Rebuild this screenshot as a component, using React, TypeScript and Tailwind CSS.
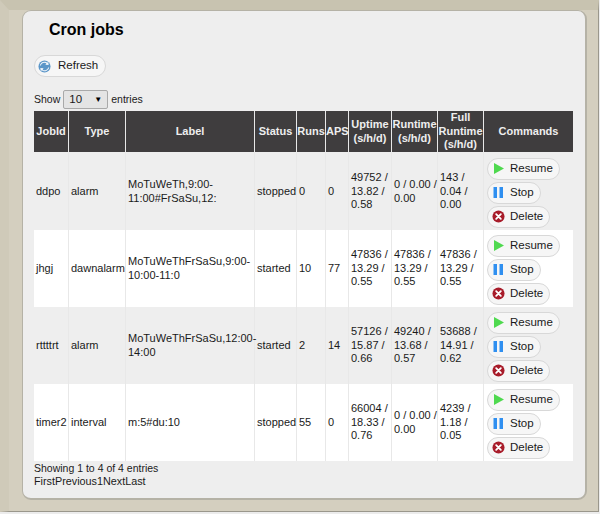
const rows = [
  { id: "ddpo", type: "alarm", label: "MoTuWeTh,9:00-11:00#FrSaSu,12:", status: "stopped", runs: "0", aps: "0", up: "49752 / 13.82 / 0.58", run: "0 / 0.00 / 0.00", full: "143 / 0.04 / 0.00" },
  { id: "jhgj", type: "dawnalarm", label: "MoTuWeThFrSaSu,9:00-10:00-11:0", status: "started", runs: "10", aps: "77", up: "47836 / 13.29 / 0.55", run: "47836 / 13.29 / 0.55", full: "47836 / 13.29 / 0.55" },
  { id: "rttttrt", type: "alarm", label: "MoTuWeThFrSaSu,12:00-14:00", status: "started", runs: "2", aps: "14", up: "57126 / 15.87 / 0.66", run: "49240 / 13.68 / 0.57", full: "53688 / 14.91 / 0.62" },
  { id: "timer2", type: "interval", label: "m:5#du:10", status: "stopped", runs: "55", aps: "0", up: "66004 / 18.33 / 0.76", run: "0 / 0.00 / 0.00", full: "4239 / 1.18 / 0.05" },
]

function Pill({ icon, label }: { icon: React.ReactNode; label: string }) {
  return (
    <button className="flex h-[22px] items-center gap-[5px] rounded-full border border-[#d8d8d8] bg-[#f6f6f6] pl-[4px] pr-[6px] text-[11.5px] text-[#1a1a1a]">
      {icon}
      {label}
    </button>
  )
}

function RefreshIcon() {
  return (
    <svg width="13" height="13" viewBox="0 0 14 14">
      <circle cx="7" cy="7" r="6.5" fill="#5b96c8" />
      <path d="M3 6a4 4 0 0 1 6-2.5L8 5l3.5.5L11 2 10 3A5 5 0 0 0 2 6z" fill="#f2f6fa" />
      <path d="M11 8a4 4 0 0 1-6 2.5L6 9l-3.5-.5L3 12l1-1a5 5 0 0 0 8-3z" fill="#f2f6fa" />
    </svg>
  )
}

function PlayIcon() {
  return (
    <svg width="13" height="13" viewBox="0 0 13 13">
      <path d="M2 1l10 5.5L2 12z" fill="#4fd94f" />
    </svg>
  )
}

function PauseIcon() {
  return (
    <svg width="13" height="13" viewBox="0 0 13 13">
      <rect x="1.5" y="1" width="3.5" height="11" fill="#2f8ff0" />
      <rect x="7.5" y="1" width="3.5" height="11" fill="#2f8ff0" />
    </svg>
  )
}

function DeleteIcon() {
  return (
    <svg width="13" height="13" viewBox="0 0 14 14">
      <circle cx="7" cy="7" r="6.5" fill="#a81c2a" />
      <path d="M4.5 4.5l5 5M9.5 4.5l-5 5" stroke="#fff" strokeWidth="2" strokeLinecap="round" />
    </svg>
  )
}

export default function App() {
  return (
    <div className="h-[514px] w-[600px] overflow-hidden bg-[#ececec] font-['Liberation_Sans',Arial,sans-serif] text-[11px] text-[#1a1a1a]">
      <div className="h-[512px] w-[599px] border-b border-l-[9px] border-r border-t-[10px] border-b-[#9a978c] border-l-[#cfcab9] border-r-[#9a978c] border-t-[#c8c3b0] bg-[#d4cfbf] pl-[13px]">
        <div className="h-[490px] w-[565px] rounded-[9px] border border-b-2 border-r-2 border-[#b5b2a6] bg-[#eeeeee] pl-[11px]">
          <h1 className="ml-[15px] pt-[9px] text-[16px] font-bold leading-[20px] text-black">Cron jobs</h1>
          <div className="mt-[15px] flex">
            <button className="flex h-[22px] items-center gap-[7px] rounded-full border border-[#d8d8d8] bg-[#f6f6f6] pl-[3px] pr-[7px] text-[11.5px]">
              <RefreshIcon />
              Refresh
            </button>
          </div>
          <div className="mt-[13px] flex h-[19px] items-center text-[10.5px]">
            Show
            <div className="ml-[3px] mr-[3px] flex h-[19px] w-[45px] items-center justify-between rounded-[2px] border border-[#a9a9a9] bg-[#e4e4e4] pl-[5px] pr-[5px] text-[11.5px]">
              10
              <span className="text-[8px] text-black">▼</span>
            </div>
            entries
          </div>
          <table className="mt-[2px] w-[539px] table-fixed border-separate border-spacing-0">
            <colgroup>
              <col className="w-[35px]" />
              <col className="w-[57px]" />
              <col className="w-[129px]" />
              <col className="w-[42px]" />
              <col className="w-[29px]" />
              <col className="w-[23px]" />
              <col className="w-[43px]" />
              <col className="w-[46px]" />
              <col className="w-[46px]" />
              <col className="w-[89px]" />
            </colgroup>
            <thead>
              <tr className="h-[42px] text-center text-[11px] font-bold leading-[13.5px] text-[#eeeeee] [&>th]:border-b [&>th]:border-r [&>th]:border-b-[#eeeeee] [&>th]:border-r-[#e8e8e8] [&>th]:bg-[#3f3d3e] [&>th:last-child]:border-r-0">
                <th>JobId</th>
                <th>Type</th>
                <th>Label</th>
                <th>Status</th>
                <th>Runs</th>
                <th>APS</th>
                <th>Uptime (s/h/d)</th>
                <th>Runtime (s/h/d)</th>
                <th>Full Runtime (s/h/d)</th>
                <th>Commands</th>
              </tr>
            </thead>
            <tbody>
              {rows.map((r, i) => (
                <tr key={r.id} className={`${i % 2 === 0 ? "bg-[#eeeeee]" : "bg-white"} h-[77px] leading-[13.5px] [&>td]:border-r [&>td]:border-[#e8e8e8] [&>td]:pl-[2px] [&>td:last-child]:border-r-0`}>
                  <td>{r.id}</td>
                  <td>{r.type}</td>
                  <td>{r.label}</td>
                  <td>{r.status}</td>
                  <td>{r.runs}</td>
                  <td>{r.aps}</td>
                  <td>{r.up}</td>
                  <td>{r.run}</td>
                  <td>{r.full}</td>
                  <td>
                    <div className="flex flex-col items-start gap-[2px] pl-[1px] pt-[2px]">
                      <Pill icon={<PlayIcon />} label="Resume" />
                      <Pill icon={<PauseIcon />} label="Stop" />
                      <Pill icon={<DeleteIcon />} label="Delete" />
                    </div>
                  </td>
                </tr>
              ))}
            </tbody>
          </table>
          <div className="mt-[1px] leading-[13px] text-[10.5px]">Showing 1 to 4 of 4 entries</div>
          <div className="leading-[13px] text-[10.8px]">FirstPrevious1NextLast</div>
        </div>
      </div>
    </div>
  )
}
